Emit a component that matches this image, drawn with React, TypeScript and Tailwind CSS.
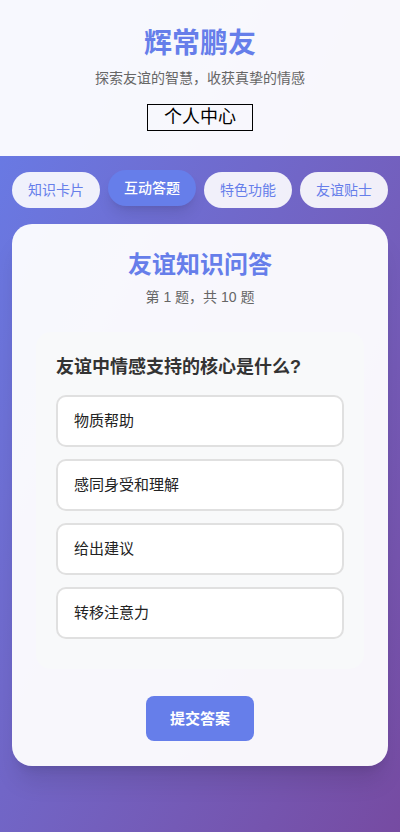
import { useState } from "react";

const tabs = ["知识卡片", "互动答题", "特色功能", "友谊贴士"];
const options = ["物质帮助", "感同身受和理解", "给出建议", "转移注意力"];

const App = () => {
  const [active, setActive] = useState(1);
  const [picked, setPicked] = useState<number | null>(null);

  return (
    <div className="min-h-screen w-full bg-gradient-to-br from-[#667eea] to-[#764ba2] font-['Liberation_Sans','Noto_Sans_CJK_SC',sans-serif]">
      {/* Header */}
      <header className="bg-white/95 pt-[26px] pb-[25px] flex flex-col items-center">
        <h1 className="text-[28px] leading-[36px] font-bold text-[#667eea]">辉常鹏友</h1>
        <p className="mt-[6px] text-sm leading-5 text-[#666]">探索友谊的智慧，收获真挚的情感</p>
        <button className="mt-4 border border-black px-4 text-[18px] leading-[25px] text-black">
          个人中心
        </button>
      </header>

      {/* Tabs */}
      <nav className="flex justify-center gap-2 px-3 pt-4">
        {tabs.map((t, i) => (
          <button
            key={t}
            onClick={() => setActive(i)}
            className={`h-9 px-4 rounded-full text-sm transition-all ${
              i === active
                ? "bg-[#667eea] text-white font-medium shadow-lg -translate-y-0.5"
                : "bg-white/90 text-[#667eea]"
            }`}
          >
            {t}
          </button>
        ))}
      </nav>

      {/* Quiz card */}
      <section className="mx-3 mt-4 bg-white/95 rounded-[20px] shadow-xl px-6 pt-6 pb-[25px] flex flex-col items-center">
        <h2 className="text-2xl leading-[34px] font-bold text-[#667eea]">友谊知识问答</h2>
        <p className="mt-[5px] text-sm leading-5 text-[#666]">第 1 题，共 10 题</p>

        <div className="w-full mt-[25px] bg-[#f8f9fa] rounded-[15px] px-5 pt-[22px] pb-[30px]">
          <h3 className="text-[18px] leading-[26px] font-bold text-[#333] mb-[15px]">
            友谊中情感支持的核心是什么?
          </h3>
          <div className="flex flex-col gap-3">
            {options.map((o, i) => (
              <button
                key={o}
                onClick={() => setPicked(i)}
                className={`w-full text-left bg-white border-2 rounded-[10px] px-4 py-[15px] text-[15px] leading-[18px] text-[#222] ${
                  picked === i ? "border-[#667eea]" : "border-[#e0e0e0]"
                }`}
              >
                {o}
              </button>
            ))}
          </div>
        </div>

        <button className="mt-[27px] bg-[#667eea] text-white font-bold text-[15px] leading-[21px] px-6 py-3 rounded-lg">
          提交答案
        </button>
      </section>
    </div>
  );
};

export default App;
